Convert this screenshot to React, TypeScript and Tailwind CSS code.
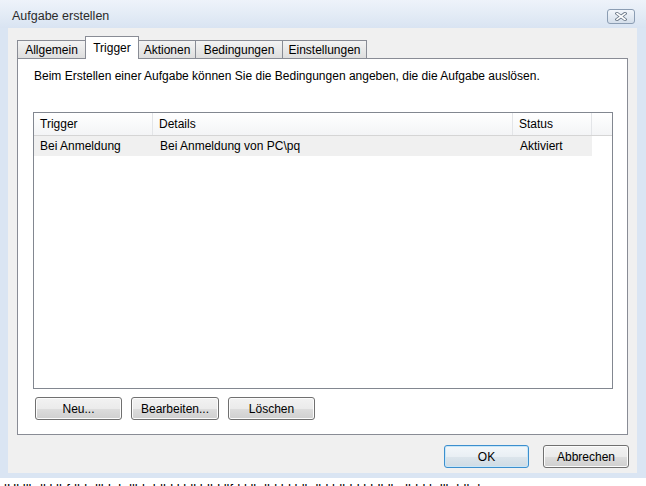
import React from 'react';

const tabs = [
  { label: 'Allgemein', w: 'w-[69px]' },
  { label: 'Trigger', w: 'w-[54px]', active: true },
  { label: 'Aktionen', w: 'w-[58px]' },
  { label: 'Bedingungen', w: 'w-[88px]' },
  { label: 'Einstellungen', w: 'w-[85px]' },
];

function WinButton({ label, w, primary = false }: { label: string; w: string; primary?: boolean }) {
  return (
    <button
      type="button"
      className={`${w} h-[23px] rounded-[3px] border text-[12px] text-black flex items-center justify-center ${
        primary
          ? 'border-[#3c8fce] bg-[linear-gradient(to_bottom,#f3f7fa_0%,#e9eff4_50%,#dce5ec_51%,#cfdbe4_100%)] shadow-[inset_0_0_0_1px_#c8e6f8]'
          : 'border-[#707070] bg-[linear-gradient(to_bottom,#f2f2f2_0%,#ebebeb_50%,#dddddd_51%,#cfcfcf_100%)] shadow-[inset_0_0_0_1px_#fcfcfc]'
      }`}
    >
      {label}
    </button>
  );
}

export default function App() {
  return (
    <div className="w-[646px] h-[486px] overflow-hidden bg-[#dae5f3] font-['Liberation_Sans',Arial,sans-serif] text-[12px] text-black">
      {/* Title bar */}
      <div className="h-[28px] flex items-start justify-between pl-[12px] pr-[11px] bg-[linear-gradient(to_bottom,#eef3fa,#d9e4f2)]">
        <span className="mt-[9px] text-[12.5px] leading-[15px] text-[#2a2a2a]">Aufgabe erstellen</span>
        <div className="mt-[9px] w-[28px] h-[15px] rounded-[3px] border border-[#8b9db3] bg-[linear-gradient(to_bottom,#f2f6fb,#d5dfeb)] flex items-center justify-center">
          <svg width="12" height="9" viewBox="0 0 12 9">
            <path d="M2 1.5 L10 7.5 M10 1.5 L2 7.5" stroke="#6b7888" strokeWidth="3.4" strokeLinecap="square" />
            <path d="M2 1.5 L10 7.5 M10 1.5 L2 7.5" stroke="#ffffff" strokeWidth="1.6" strokeLinecap="square" />
          </svg>
        </div>
      </div>

      {/* Client area */}
      <div className="ml-[8px] w-[629px] h-[445px] bg-[#f0f0f0] flex flex-col">
        {/* Tabs */}
        <div className="h-[30px] pl-[9px] flex items-end">
          {tabs.map((t, i) =>
            t.active ? (
              <div
                key={t.label}
                className={`${t.w} h-[23px] -mb-px -ml-px relative z-10 bg-white border border-b-0 border-[#898c95] flex justify-center pt-[2px]`}
              >
                {t.label}
              </div>
            ) : (
              <div
                key={t.label}
                className={`${t.w} h-[18px] ${i > 0 ? '-ml-px' : ''} border border-b-0 border-[#898c95] bg-[linear-gradient(to_bottom,#f3f3f3,#dedede)] flex items-center justify-center pt-[1px]`}
              >
                {t.label}
              </div>
            )
          )}
        </div>

        {/* Tab panel */}
        <div className="ml-[9px] w-[611px] h-[377px] bg-white border border-[#898c95] flex flex-col">
          <p className="pl-[16px] pt-[9px] leading-[16px]">
            Beim Erstellen einer Aufgabe können Sie die Bedingungen angeben, die die Aufgabe auslösen.
          </p>

          {/* List view */}
          <div className="ml-[15px] mt-[28px] w-[580px] h-[277px] border border-[#828790] bg-white flex flex-col">
            <div className="h-[23px] flex border-b border-[#d5d5d5] bg-[linear-gradient(to_bottom,#ffffff,#f3f4f6)]">
              <div className="w-[119px] pl-[6px] flex items-center border-r border-[#e3e5e8]">Trigger</div>
              <div className="w-[360px] pl-[6px] flex items-center border-r border-[#e3e5e8]">Details</div>
              <div className="w-[79px] pl-[6px] flex items-center border-r border-[#e3e5e8]">Status</div>
              <div className="flex-1" />
            </div>
            <div className="h-[20px] w-[558px] flex bg-[#f0f0f0]">
              <div className="w-[119px] pl-[6px] flex items-center">Bei Anmeldung</div>
              <div className="w-[360px] pl-[7px] flex items-center">Bei Anmeldung von PC\pq</div>
              <div className="w-[79px] pl-[7px] flex items-center">Aktiviert</div>
            </div>
          </div>

          <div className="ml-[17px] mt-[8px] flex gap-[9px]">
            <WinButton label="Neu..." w="w-[87px]" />
            <WinButton label="Bearbeiten..." w="w-[88px]" />
            <WinButton label="Löschen" w="w-[87px]" />
          </div>
        </div>

        {/* Dialog buttons */}
        <div className="mt-[10px] pr-[8px] flex justify-end gap-[14px]">
          <WinButton label="OK" w="w-[85px]" primary />
          <WinButton label="Abbrechen" w="w-[86px]" />
        </div>
      </div>

      {/* Frame bottom and the cut-off window content below it */}
      <div className="h-[5px]" />
      <div className="h-[8px] bg-white overflow-hidden pl-[4px]">
        <div className="mt-[4px] text-[13px] leading-[13px] text-black whitespace-nowrap">
          lHl llbdl klbfdhl dlbk kdlhb ldhkl ldl blhl llfd klkdhl ld hlb lhkldbhl bldhlk dhbl kdlh hlkd
        </div>
      </div>
    </div>
  );
}
